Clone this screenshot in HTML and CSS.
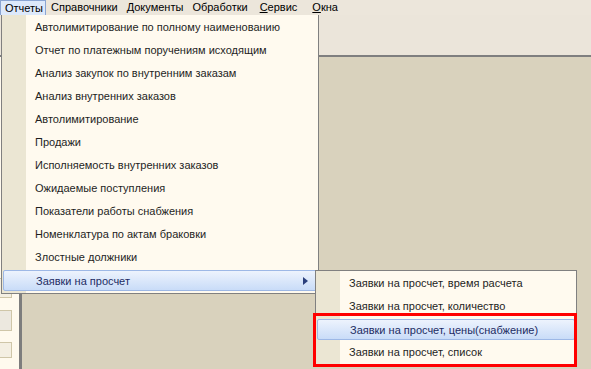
FILE: index.html
```html
<!DOCTYPE html>
<html lang="ru">
<head>
    <meta charset="UTF-8">
    <title>Отчеты</title>
    <link rel="stylesheet" href="styles.css">
</head>
<body>
    <div class="menubar">
        <span class="top-item active">Отчеты</span>
        <span class="top-item">Справочники</span>
        <span class="top-item">Документы</span>
        <span class="top-item">Обработки</span>
        <span class="top-item service"><u>С</u>ервис</span>
        <span class="top-item last"><u>О</u>кна</span>
    </div>
    <div class="workspace">
        <div class="toolstrip"></div>
        <div class="desk">
            <div class="sidepanel">
                <div class="side-btn arrow">&#9660;</div>
                <div class="side-btn tall"></div>
                <div class="side-btn"></div>
            </div>
            <div class="area"></div>
        </div>
    </div>

    <div class="menu main-menu">
        <div class="item">Автолимитирование по полному наименованию</div>
        <div class="item">Отчет по платежным поручениям исходящим</div>
        <div class="item">Анализ закупок по внутренним заказам</div>
        <div class="item">Анализ внутренних заказов</div>
        <div class="item">Автолимитирование</div>
        <div class="item">Продажи</div>
        <div class="item">Исполняемость внутренних заказов</div>
        <div class="item">Ожидаемые поступления</div>
        <div class="item">Показатели работы снабжения</div>
        <div class="item">Номенклатура по актам браковки</div>
        <div class="item">Злостные должники</div>
        <div class="item hot sub">Заявки на просчет<span class="tri"></span></div>
    </div>

    <div class="menu sub-menu">
        <div class="item">Заявки на просчет, время расчета</div>
        <div class="item">Заявки на просчет, количество</div>
        <div class="item hot">Заявки на просчет, цены(снабжение)</div>
        <div class="item">Заявки на просчет, список</div>
    </div>
    <div class="mark"></div>
</body>
</html>
```

FILE: styles.css
```css
body {
    margin: 0;
    width: 591px;
    height: 369px;
    overflow: hidden;
    position: relative;
    background: #ebe5da;
    font-family: "Liberation Sans", Arial, sans-serif;
    font-size: 11px;
    color: #1e1e1e;
}
.menubar {
    height: 15px;
    display: flex;
    align-items: flex-start;
    gap: 9px;
    background: #ece6db;
}
.top-item {
    line-height: 15px;
    color: #000;
}
.top-item.active {
    padding: 0 2px 0 4px;
    margin-right: -4px;
    background: #dde9fb;
    border: 1px solid #8aa5d3;
    border-bottom: none;
    line-height: 14px;
}
.top-item.service {
    margin-left: 3px;
}
.top-item.last {
    margin-left: 6px;
}
.workspace {
    height: 354px;
    display: flex;
    flex-direction: column;
}
.toolstrip {
    height: 55px;
    background: #ebe5da;
    border-bottom: 2px solid #7f7f7f;
}
.desk {
    flex: 1;
    display: flex;
    background: #d9d2bd;
}
.sidepanel {
    width: 19px;
    background: #fffaee;
    border-right: 3px solid #7d7d7d;
    display: flex;
    flex-direction: column;
    padding-top: 221px;
}
.side-btn {
    width: 11px;
    height: 14px;
    border: 1px solid #cfc6a8;
    border-left: none;
    background: #f4efe2;
    margin-bottom: 11px;
}
.side-btn.arrow {
    height: 18px;
    font-size: 7px;
    line-height: 18px;
    text-align: center;
    color: #b9b39f;
    margin-bottom: 12px;
}
.side-btn.tall {
    height: 19px;
    background: #ece8df;
}
.area {
    flex: 1;
}

.menu {
    position: absolute;
    background: #fffaef;
    border: 1px solid #808080;
    box-sizing: border-box;
    background-image: linear-gradient(to right, #ebe6d3 0, #ebe6d3 24px, transparent 24px);
    background-clip: padding-box;
    padding: 1px 0;
}
.main-menu {
    left: 1px;
    top: 15px;
    width: 318px;
    border-top: none;
}
.sub-menu {
    left: 315px;
    top: 270px;
    width: 262px;
    height: 97px;
}
.item {
    height: 23px;
    line-height: 23px;
    padding-left: 33px;
    position: relative;
    white-space: nowrap;
}
.item.hot {
    margin: 1px;
    padding-left: 32px;
    height: 21px;
    line-height: 20px;
    border: 1px solid #9db8e6;
    border-radius: 2px;
    box-sizing: border-box;
    background: linear-gradient(#edf3fd, #c9dcf8);
    color: #1d2c63;
}
.tri {
    position: absolute;
    right: 8px;
    top: 6px;
    border-left: 5px solid #2b3f7c;
    border-top: 4px solid transparent;
    border-bottom: 4px solid transparent;
}
.mark {
    position: absolute;
    left: 313px;
    top: 313px;
    width: 264px;
    height: 54px;
    border: 3px solid #ff0000;
    box-sizing: border-box;
}
```
